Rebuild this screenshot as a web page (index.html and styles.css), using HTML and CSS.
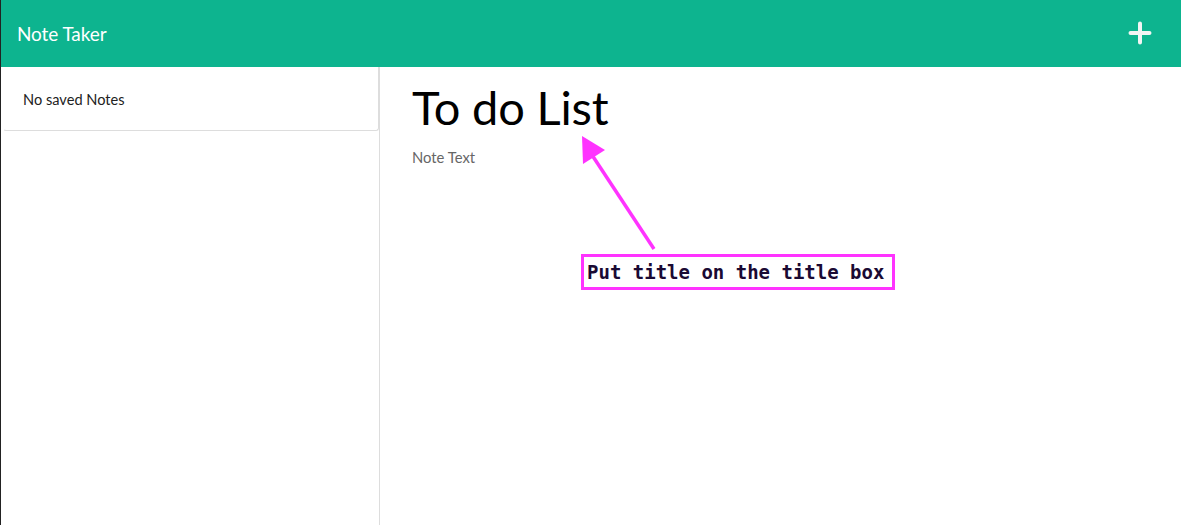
FILE: index.html
```html
<!DOCTYPE html>
<html>
<head>
<meta charset="utf-8">
<link rel="stylesheet" href="styles.css">
</head>
<body>
<div class="page">
  <nav class="navbar">
    <span class="brand">Note Taker</span>
    <svg class="plus" width="24" height="24" viewBox="0 0 24 24"><path d="M12 2.5v19M2.5 12h19" stroke="#f2f5f4" stroke-width="4" stroke-linecap="round" fill="none"/></svg>
  </nav>
  <div class="main">
    <aside class="sidebar">
      <ul class="list">
        <li class="item">No saved Notes</li>
      </ul>
    </aside>
    <section class="editor">
      <div class="title">To do List</div>
      <div class="note-text">Note Text</div>
      <svg class="arrow" width="120" height="120" viewBox="0 0 120 120"><line x1="84" y1="119" x2="22" y2="25" stroke="#ff33ff" stroke-width="3.5"/><polygon points="12,6 13,34 35,20" fill="#ff33ff"/></svg>
      <div class="callout">Put title on the title box</div>
    </section>
  </div>
</div>
</body>
</html>
```
FILE: styles.css
```css
* { box-sizing: border-box; }
html, body { margin: 0; padding: 0; height: 100%; }
body { font-family: Lato, "Open Sans", sans-serif; background: #fff; }
.page { height: 525px; border-left: 1px solid #222; display: flex; flex-direction: column; }
.navbar { height: 67px; background: #0db48f; display: flex; align-items: center; justify-content: space-between; padding: 0 29px 0 16px; flex-shrink: 0; }
.brand { color: #fff; font-size: 19px; letter-spacing: -0.1px; }
.plus { display: block; margin-top: -2px; }
.main { flex: 1; display: flex; }
.sidebar { width: 379px; border-right: 1px solid #ddd; padding: 0 0 0 2px; }
.list { margin: 0; padding: 0; list-style: none; }
.item { height: 64px; padding: 24px 20px 0 19px; font-size: 14.6px; color: #222; border: 1px solid #ddd; border-top: 0; border-left-color: #fff; border-radius: 0 0 3px 3px; }
.editor { flex: 1; position: relative; padding: 12px 0 0 32px; }
.title { font-size: 47px; color: #000; line-height: 56px; height: 68px; letter-spacing: -0.2px; }
.note-text { font-size: 14.8px; color: #666; line-height: 20px; }
.arrow { position: absolute; left: 190px; top: 63px; }
.callout { position: absolute; left: 201px; top: 187px; width: 314px; height: 36px; border: 3px solid #ff33ff; font-family: "DejaVu Sans Mono", monospace; font-weight: bold; font-size: 19px; color: #1a0a33; padding: 3px 0 0 3px; line-height: 24px; white-space: nowrap; }
```
